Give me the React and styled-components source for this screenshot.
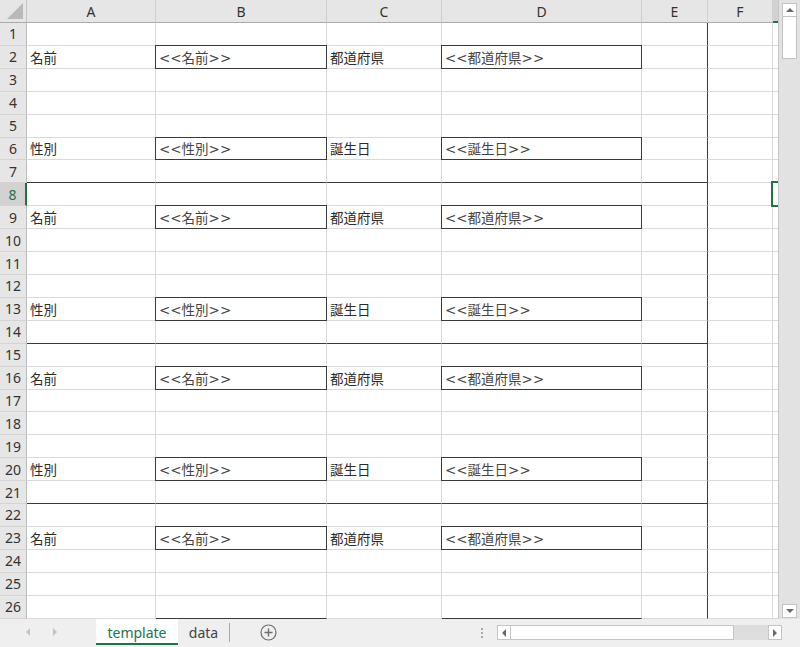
import React from 'react';
import styled, { createGlobalStyle, css } from 'styled-components';

const GREEN = '#217346';
const GRID = '#dadada';
const INK = '#2b2b2b';

const GlobalStyle = createGlobalStyle`
    html, body {
        margin: 0;
        padding: 0;
        overflow: hidden;
        background: #efefef;
    }
`;

const COLUMNS = ['A', 'B', 'C', 'D', 'E', 'F', 'G'];
const ROW_COUNT = 26;

// each block of 7 rows repeats the same form
function cellsForRow(row) {
    const offset = (row - 1) % 7;
    const cells = {};
    if (offset === 1) {
        cells.A = { text: '名前' };
        cells.B = { text: '<<名前>>', boxed: true };
        cells.C = { text: '都道府県' };
        cells.D = { text: '<<都道府県>>', boxed: true };
    }
    if (offset === 5) {
        cells.A = { text: '性別' };
        cells.B = { text: '<<性別>>', boxed: true };
        cells.C = { text: '誕生日' };
        cells.D = { text: '<<誕生日>>', boxed: true };
    }
    if (offset === 6) {
        ['A', 'B', 'C', 'D', 'E'].forEach((c) => {
            cells[c] = { ...(cells[c] || {}), darkBottom: true };
        });
    }
    if (row === 26) {
        cells.B = { darkBottom: true };
        cells.D = { darkBottom: true };
    }
    if (row === 8) {
        cells.G = { selected: true };
    }
    return cells;
}

export default function App() {
    const rows = Array.from({ length: ROW_COUNT }, (_, i) => i + 1);

    return (
        <Window>
            <GlobalStyle />
            <Main>
                <Sheet>
                    <Corner>
                        <CornerTriangle />
                    </Corner>
                    {COLUMNS.map((c) => (
                        <ColHeader key={c} $active={c === 'G'}>{c === 'G' ? '' : c}</ColHeader>
                    ))}

                    {rows.map((row) => {
                        const cells = cellsForRow(row);
                        return (
                            <React.Fragment key={row}>
                                <RowHeader $active={row === 8}>{row}</RowHeader>
                                {COLUMNS.map((c) => {
                                    const cell = cells[c] || {};
                                    return (
                                        <Cell
                                            key={c}
                                            $boxed={cell.boxed}
                                            $darkBottom={cell.darkBottom}
                                            $darkRight={c === 'E'}
                                            $selected={cell.selected}
                                            $placeholder={cell.boxed}
                                        >
                                            {cell.text}
                                        </Cell>
                                    );
                                })}
                            </React.Fragment>
                        );
                    })}
                </Sheet>

                <VScroll>
                    <ScrollButton>
                        <Arrow $dir="up" />
                    </ScrollButton>
                    <VThumb />
                    <VTrack />
                    <ScrollButton>
                        <Arrow $dir="down" />
                    </ScrollButton>
                </VScroll>
            </Main>

            <TabBar>
                <NavArea>
                    <Arrow $dir="left" $faint />
                    <Arrow $dir="right" $faint />
                </NavArea>
                <SheetTab $active>template</SheetTab>
                <SheetTab>data</SheetTab>
                <TabDivider />
                <AddSheet>
                    <svg width="17" height="17" viewBox="0 0 17 17">
                        <circle cx="8.5" cy="8.5" r="7.5" fill="none" stroke="#6f6f6f" strokeWidth="1.2" />
                        <path d="M8.5 4.5v8M4.5 8.5h8" stroke="#6f6f6f" strokeWidth="1.4" />
                    </svg>
                </AddSheet>
                <Spacer />
                <Grip>
                    <span />
                    <span />
                    <span />
                </Grip>
                <HScroll>
                    <ScrollButton $horizontal>
                        <Arrow $dir="left" />
                    </ScrollButton>
                    <HThumb />
                    <HTrack />
                    <ScrollButton $horizontal>
                        <Arrow $dir="right" />
                    </ScrollButton>
                </HScroll>
            </TabBar>
        </Window>
    );
}

const Window = styled.div`
    width: 800px;
    height: 647px;
    display: flex;
    flex-direction: column;
    background: #efefef;
    overflow: hidden;
`;

const Main = styled.div`
    display: flex;
    height: 619px;
`;

const Sheet = styled.div`
    width: 779px;
    display: grid;
    grid-template-columns: 27px 129px 171px 115px 200px 66px 65px 6px;
    grid-template-rows: 23px repeat(${ROW_COUNT}, 22.92px);
    background: #fff;
    overflow: hidden;
    border-right: 1px solid #c6c6c6;
    box-sizing: border-box;
`;

const Corner = styled.div`
    background: #e6e6e6;
    border-right: 1px solid #c4c4c4;
    border-bottom: 1px solid #ababab;
    position: relative;
`;

const CornerTriangle = styled.div`
    position: absolute;
    right: 3px;
    bottom: 3px;
    width: 0;
    height: 0;
    border-left: 16px solid transparent;
    border-bottom: 16px solid #b9b9b9;
`;

const headerText = css`
    font-family: "Noto Sans", "DejaVu Sans", sans-serif;
    font-size: 14px;
    color: #333;
    display: flex;
    align-items: center;
    justify-content: center;
    box-sizing: border-box;
`;

const ColHeader = styled.div`
    ${headerText};
    background: ${(p) => (p.$active ? '#d2d2d2' : '#e6e6e6')};
    border-right: 1px solid #cfcfcf;
    border-bottom: ${(p) => (p.$active ? `2px solid ${GREEN}` : '1px solid #ababab')};
`;

const RowHeader = styled.div`
    ${headerText};
    font-size: 14px;
    background: ${(p) => (p.$active ? '#d2d2d2' : '#e6e6e6')};
    color: ${(p) => (p.$active ? GREEN : '#333')};
    border-right: ${(p) => (p.$active ? `2px solid ${GREEN}` : '1px solid #bdbdbd')};
    border-bottom: 1px solid #d4d4d4;
`;

const Cell = styled.div`
    box-sizing: border-box;
    border-right: 1px solid ${(p) => (p.$darkRight ? '#3a3a3a' : GRID)};
    border-bottom: 1px solid ${(p) => (p.$darkBottom ? '#3a3a3a' : GRID)};
    padding-left: 3px;
    display: flex;
    align-items: center;
    white-space: nowrap;
    overflow: visible;
    font-family: "DejaVu Sans", "Noto Sans CJK JP", sans-serif;
    font-size: 13.5px;
    color: ${(p) => (p.$placeholder ? '#444' : INK)};

    ${(p) => p.$boxed && css`
        position: relative;
        &::after {
            content: '';
            position: absolute;
            top: -1px;
            left: -1px;
            right: -1px;
            bottom: -1px;
            border: 1px solid #3a3a3a;
            pointer-events: none;
        }
    `}

    ${(p) => p.$selected && css`
        position: relative;
        &::after {
            content: '';
            position: absolute;
            top: -2px;
            left: -2px;
            right: -6px;
            bottom: -2px;
            border: 2px solid ${GREEN};
            pointer-events: none;
        }
    `}
`;

const VScroll = styled.div`
    width: 21px;
    display: flex;
    flex-direction: column;
    align-items: center;
    padding: 3px 0 1px;
    box-sizing: border-box;
    background: #e2e2e2;
`;

const ScrollButton = styled.div`
    width: ${(p) => (p.$horizontal ? '14px' : '15px')};
    height: ${(p) => (p.$horizontal ? '15px' : '14px')};
    background: #fff;
    border: 1px solid #c4c4c4;
    box-sizing: border-box;
    display: flex;
    align-items: center;
    justify-content: center;
    flex-shrink: 0;
`;

const VThumb = styled.div`
    width: 15px;
    height: 42px;
    background: #fff;
    border: 1px solid #c4c4c4;
    border-top: none;
    box-sizing: border-box;
`;

const VTrack = styled.div`
    flex: 1;
`;

const arrowShapes = {
    up: css`
        border-left: 4px solid transparent;
        border-right: 4px solid transparent;
        border-bottom: 4px solid var(--c);
    `,
    down: css`
        border-left: 4px solid transparent;
        border-right: 4px solid transparent;
        border-top: 4px solid var(--c);
    `,
    left: css`
        border-top: 4px solid transparent;
        border-bottom: 4px solid transparent;
        border-right: 4px solid var(--c);
    `,
    right: css`
        border-top: 4px solid transparent;
        border-bottom: 4px solid transparent;
        border-left: 4px solid var(--c);
    `,
};

const Arrow = styled.span`
    --c: ${(p) => (p.$faint ? '#c3c3c3' : '#6a6a6a')};
    display: block;
    width: 0;
    height: 0;
    ${(p) => arrowShapes[p.$dir]};
`;

const TabBar = styled.div`
    height: 28px;
    display: flex;
    align-items: flex-start;
    background: #efefef;
`;

const NavArea = styled.div`
    width: 96px;
    height: 26px;
    display: flex;
    align-items: center;
    gap: 23px;
    padding-left: 26px;
    box-sizing: border-box;
`;

const SheetTab = styled.div`
    height: 26px;
    width: ${(p) => (p.$active ? '82px' : '51px')};
    box-sizing: border-box;
    display: flex;
    align-items: center;
    justify-content: center;
    padding-top: 2px;
    font-family: "Noto Sans", "DejaVu Sans", sans-serif;
    font-size: 14px;
    color: ${(p) => (p.$active ? GREEN : '#444')};
    background: ${(p) => (p.$active ? '#fff' : 'transparent')};
    border-bottom: 2px solid ${(p) => (p.$active ? GREEN : 'transparent')};
`;

const TabDivider = styled.div`
    width: 1px;
    height: 19px;
    margin-top: 4px;
    background: #a8a8a8;
`;

const AddSheet = styled.div`
    margin-left: 30px;
    height: 27px;
    display: flex;
    align-items: center;
`;

const Spacer = styled.div`
    flex: 1;
`;

const Grip = styled.div`
    width: 3px;
    height: 27px;
    margin-right: 13px;
    display: flex;
    flex-direction: column;
    justify-content: center;
    gap: 2px;

    span {
        width: 2px;
        height: 2px;
        background: #a8a8a8;
    }
`;

const HScroll = styled.div`
    width: 285px;
    height: 15px;
    margin-top: 6px;
    margin-right: 18px;
    display: flex;
    background: #dedede;
`;

const HThumb = styled.div`
    width: 223px;
    height: 15px;
    background: #fff;
    border: 1px solid #c4c4c4;
    border-left: none;
    box-sizing: border-box;
`;

const HTrack = styled.div`
    flex: 1;
`;
